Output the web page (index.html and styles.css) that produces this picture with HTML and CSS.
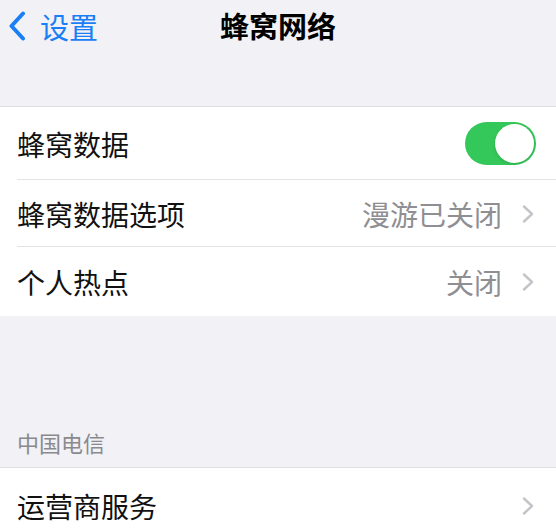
FILE: index.html
```html
<!DOCTYPE html>
<html lang="zh-CN">
<head>
<meta charset="utf-8">
<title>蜂窝网络</title>
<link rel="stylesheet" href="styles.css">
</head>
<body>
<div class="screen">
  <header class="nav">
    <div class="back">
      <svg class="back-chev" width="18" height="30" viewBox="0 0 18 30"><path d="M15 2.5 L3.5 15 L15 27.5" fill="none" stroke="#1a7ef5" stroke-width="4" stroke-linecap="round" stroke-linejoin="round"/></svg>
      <span class="back-text">设置</span>
    </div>
    <h1 class="title">蜂窝网络</h1>
  </header>
  <div class="top-gap"></div>
  <section class="group">
    <div class="row row-1">
      <span class="label">蜂窝数据</span>
      <span class="toggle"><span class="knob"></span></span>
    </div>
    <div class="row row-2">
      <span class="label">蜂窝数据选项</span>
      <span class="value">漫游已关闭</span>
      <svg class="chev" width="12" height="18" viewBox="0 0 12 18"><path d="M2 1.5 L10 9 L2 16.5" fill="none" stroke="#c4c4c9" stroke-width="2.4" stroke-linecap="round" stroke-linejoin="round"/></svg>
    </div>
    <div class="row row-3">
      <span class="label">个人热点</span>
      <span class="value">关闭</span>
      <svg class="chev" width="12" height="18" viewBox="0 0 12 18"><path d="M2 1.5 L10 9 L2 16.5" fill="none" stroke="#c4c4c9" stroke-width="2.4" stroke-linecap="round" stroke-linejoin="round"/></svg>
    </div>
  </section>
  <div class="section-header">中国电信</div>
  <section class="group">
    <div class="row row-4">
      <span class="label">运营商服务</span>
      <span class="value"></span>
      <svg class="chev" width="12" height="18" viewBox="0 0 12 18"><path d="M2 1.5 L10 9 L2 16.5" fill="none" stroke="#c4c4c9" stroke-width="2.4" stroke-linecap="round" stroke-linejoin="round"/></svg>
    </div>
  </section>
</div>
</body>
</html>
```
FILE: styles.css
```css
* { box-sizing: border-box; }
html, body {
  margin: 0;
  padding: 0;
  background: #f1f1f6;
}
body {
  font-family: "Noto Sans CJK SC", "Noto Sans", sans-serif;
  color: #111;
}
.screen {
  width: 556px;
  height: 528px;
  overflow: hidden;
  background: #f1f1f6;
}
.nav {
  position: relative;
  height: 50px;
  display: flex;
  align-items: center;
  justify-content: center;
}
.back {
  position: absolute;
  left: 8px;
  top: 10px;
  display: flex;
  align-items: center;
  gap: 14px;
  color: #1a7ef5;
}
.back-chev { display: block; }
.back-text {
  font-size: 29px;
  line-height: 30px;
  margin-top: 1px;
}
.title {
  margin: 0;
  font-size: 29px;
  font-weight: 700;
  line-height: 30px;
  color: #000;
}
.top-gap { height: 56px; }
.group {
  background: #fff;
  border-top: 1px solid #dedee2;
}
.row {
  display: flex;
  align-items: center;
  padding: 0 22px 0 17px;
  position: relative;
}
.row-1 { height: 73px; padding-right: 20px; }
.row-2 { height: 67px; }
.row-3 { height: 69px; }
.row-4 { height: 76px; }
.row-1::after, .row-2::after {
  content: "";
  position: absolute;
  left: 17px;
  right: 0;
  bottom: 0;
  height: 1px;
  background: #e4e4e7;
}
.label {
  font-size: 28px;
  line-height: 32px;
  color: #111;
  flex: 1;
}
.value {
  font-size: 28px;
  line-height: 32px;
  color: #8e8e93;
  margin-right: 20px;
}
.chev { display: block; flex: none; }
.toggle {
  width: 71px;
  height: 43px;
  border-radius: 22px;
  background: #34c759;
  display: flex;
  align-items: center;
  justify-content: flex-end;
  padding: 2px;
}
.knob {
  width: 39px;
  height: 39px;
  border-radius: 50%;
  background: #fff;
  box-shadow: 0 1px 3px rgba(0,0,0,0.15);
}
.section-header {
  height: 151px;
  display: flex;
  align-items: flex-end;
  padding: 0 0 10px 17px;
  font-size: 22px;
  line-height: 30px;
  color: #8a8a8e;
}
```
